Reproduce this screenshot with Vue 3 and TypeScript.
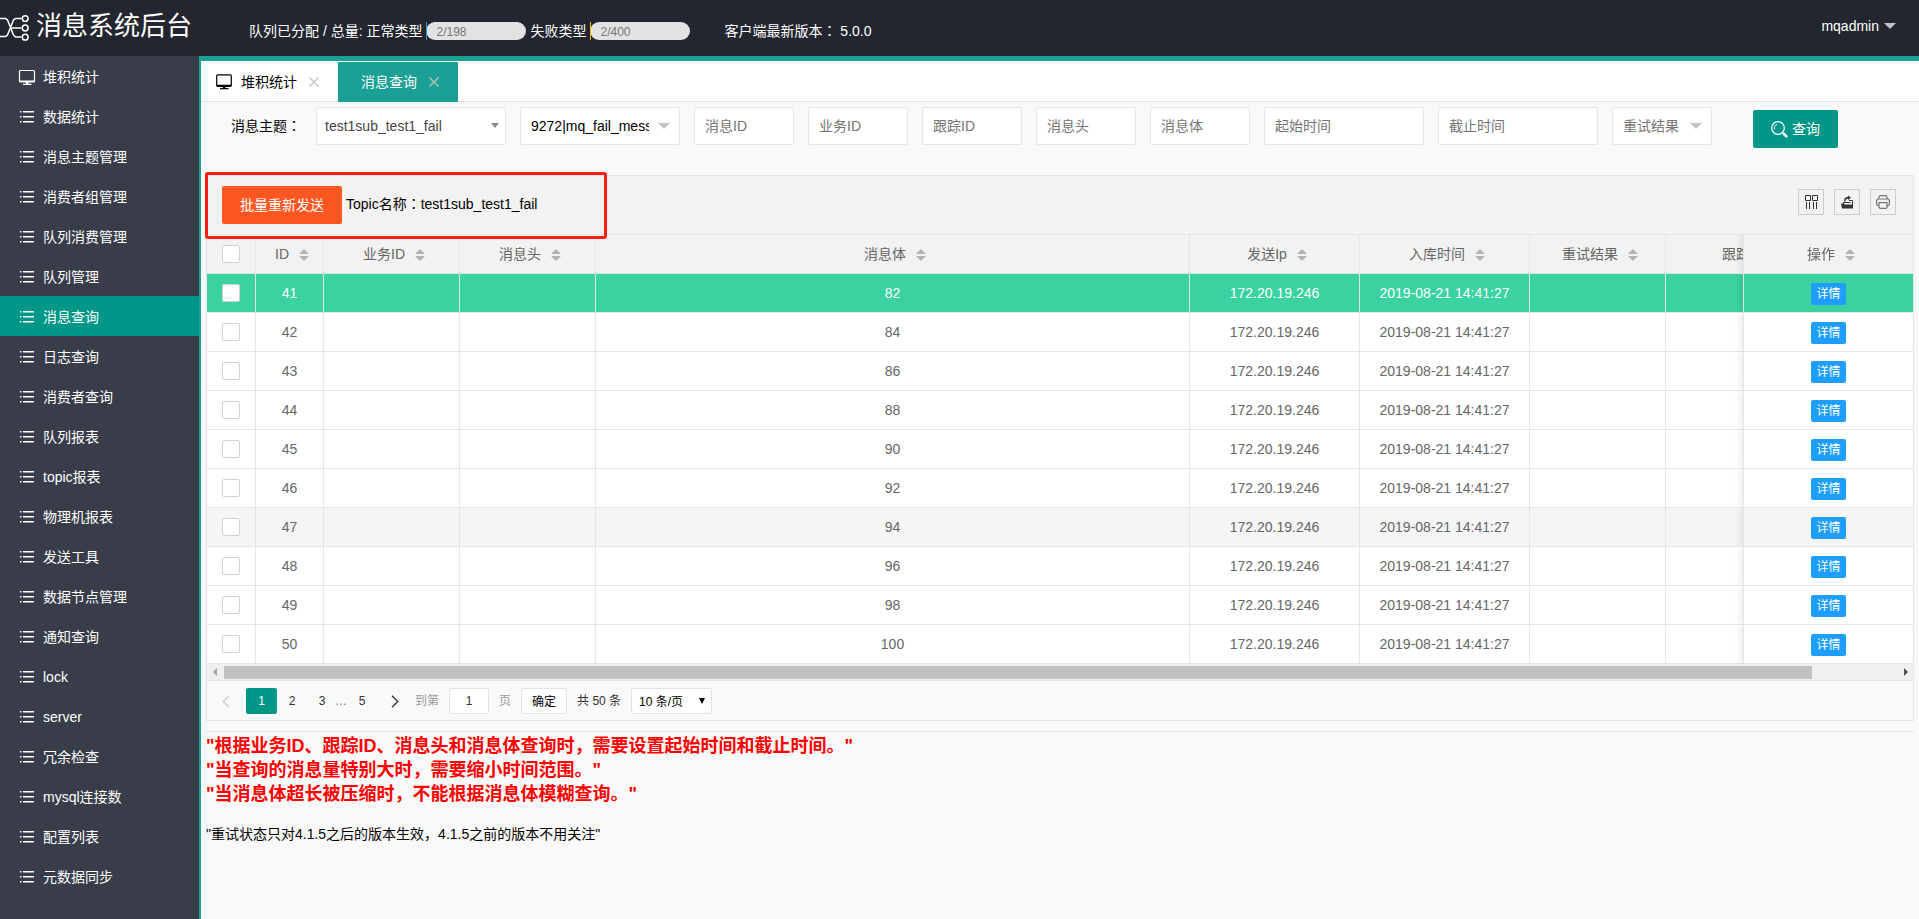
<script setup lang="ts">
import { ref } from 'vue'

interface Column {
  key: string
  label: string
}

const menu: string[] = [
  '堆积统计', '数据统计', '消息主题管理', '消费者组管理', '队列消费管理', '队列管理', '消息查询',
  '日志查询', '消费者查询', '队列报表', 'topic报表', '物理机报表', '发送工具', '数据节点管理',
  '通知查询', 'lock', 'server', '冗余检查', 'mysql连接数', '配置列表', '元数据同步',
]
const activeMenu = ref('消息查询')

const columns: Column[] = [
  { key: 'id', label: 'ID' },
  { key: 'biz', label: '业务ID' },
  { key: 'head', label: '消息头' },
  { key: 'body', label: '消息体' },
  { key: 'ip', label: '发送Ip' },
  { key: 'time', label: '入库时间' },
  { key: 'retry', label: '重试结果' },
  { key: 'trace', label: '跟踪ID' },
]

const rows = Array.from({ length: 10 }, (_, i) => ({
  id: 41 + i,
  body: 82 + i * 2,
  ip: '172.20.19.246',
  time: '2019-08-21 14:41:27',
}))
const selectedId = ref(41)
const hoveredId = ref(47)

const textFilters: string[] = ['消息ID', '业务ID', '跟踪ID', '消息头', '消息体']
const timeFilters: string[] = ['起始时间', '截止时间']
const targetPage = ref('1')
</script>

<template>
  <div class="app">
    <header class="header">
      <div class="brand">
        <svg class="logo" width="30" height="28" viewBox="0 0 30 28" fill="none" stroke="#fff" stroke-width="1.500">
          <path d="M0 4.500h5.500l2 1.500 6 15 2 2h6M0 22.500h5.500l2-1.500 6-15 2-1.500h6M11 14h10.500" />
          <circle cx="25.200" cy="4.600" r="2.900" />
          <circle cx="25.200" cy="14" r="2.900" />
          <circle cx="25.200" cy="23.200" r="2.900" />
        </svg>
        <h1>消息系统后台</h1>
      </div>
      <div class="status">
        <span>队列已分配 / 总量: 正常类型</span>
        <span class="progress normal">2/198</span>
        <span>失败类型</span>
        <span class="progress failed">2/400</span>
        <span class="version">客户端最新版本<span class="mid">：</span> 5.0.0</span>
      </div>
      <button class="user" type="button">mqadmin<i class="caret"></i></button>
    </header>

    <div class="body">
      <nav class="sidebar">
        <a
          v-for="(item, i) in menu"
          :key="item"
          href="#"
          :class="{ active: item === activeMenu }"
          @click.prevent="activeMenu = item"
        >
          <svg v-if="i === 0" class="monitor" width="18" height="17" viewBox="0 0 18 17">
            <rect x="1.500" y="1.500" width="15" height="11.500" rx="1" fill="none" stroke="currentColor" stroke-width="1.200" />
            <path d="M2 11.500h14v1.500H2zM8 13h2.500v2H8zM5 14.800h8.500V16H5z" fill="currentColor" />
          </svg>
          <svg v-else class="list" width="14" height="12" viewBox="0 0 14 12" fill="currentColor">
            <path d="M0 0h1.500v1.600H0zM3 0h11v1.600H3zM0 5h1.500v1.600H0zM3 5h11v1.600H3zM0 10h1.500v1.600H0zM3 10h11v1.600H3z" />
          </svg>
          <span>{{ item }}</span>
        </a>
      </nav>

      <main class="main">
        <div class="tabs">
          <div class="tab home">
            <svg width="16" height="16" viewBox="0 0 16 16">
              <rect x=".7" y=".9" width="14.600" height="11.400" rx="1" fill="none" stroke="currentColor" stroke-width="1.200" />
              <path d="M1 10.800h14v1.600H1zM7 12h2.500v2H7zM4 14h8.500v1.300H4z" fill="currentColor" />
            </svg>
            <span>堆积统计</span>
            <button type="button" class="close" aria-label="关闭堆积统计">
              <svg width="10" height="10" viewBox="0 0 10 10"><path d="M.5.5l9 9M9.500.5l-9 9" stroke="currentColor" stroke-width="1.200" /></svg>
            </button>
          </div>
          <div class="tab current">
            <span>消息查询</span>
            <button type="button" class="close" aria-label="关闭消息查询">
              <svg width="10" height="10" viewBox="0 0 10 10"><path d="M.5.5l9 9M9.500.5l-9 9" stroke="currentColor" stroke-width="1.200" /></svg>
            </button>
          </div>
        </div>

        <div class="content">
          <form class="filters" @submit.prevent>
            <label for="topic">消息主题<span class="mid">：</span></label>
            <div class="pick topic">
              <select id="topic"><option>test1sub_test1_fail</option></select>
            </div>
            <div class="pick wide">
              <select aria-label="消息表"><option>9272|mq_fail_message_01</option></select>
            </div>
            <input v-for="f in textFilters" :key="f" type="text" :placeholder="f" :aria-label="f">
            <input v-for="f in timeFilters" :key="f" class="wide" type="text" :placeholder="f" :aria-label="f">
            <div class="pick retry">
              <select aria-label="重试结果"><option>重试结果</option></select>
            </div>
            <button class="search" type="submit">
              <svg width="17" height="17" viewBox="0 0 17 17" fill="none" stroke="currentColor">
                <circle cx="7" cy="7" r="6.300" stroke-width="1.200" />
                <path d="M3.700 8.500A3.600 3.600 0 0 1 6 3.500" stroke-width="1" />
                <path d="M11.500 11.500l1.500 1.500" stroke-width="1.200" />
                <path d="M13 13l2.400 2.400" stroke-width="2.600" stroke-linecap="round" />
              </svg>
              <span>查询</span>
            </button>
          </form>

          <section class="panel">
            <div class="toolbar">
              <button class="resend" type="button">批量重新发送</button>
              <span class="topic-name">Topic名称<span class="mid">：</span>test1sub_test1_fail</span>
              <div class="tools">
                <button type="button" aria-label="筛选列">
                  <svg width="14" height="14" viewBox="0 0 14 14" fill="none" stroke="#333">
                    <path d="M1.500.5h5v5h-5zM8.500.5h5v5h-5zM2.500 7v7M5.500 7v7M9.500 7v7M12.500 7v7" />
                  </svg>
                </button>
                <button type="button" aria-label="导出">
                  <svg width="14" height="14" viewBox="0 0 14 14" fill="#333">
                    <path d="M1 8.500h2.500l1 1H13V13.500H2zM8 .5l3 2.200-3 2.200V3.500C6.300 3.500 5.600 4.600 5.300 6.500H4C4 3.500 5.300 1.900 8 1.700z" />
                    <path d="M3.500 9V7.500H6M9 5.500h3.500V10M5.500 7.500h5" fill="none" stroke="#333" />
                  </svg>
                </button>
                <button type="button" aria-label="打印">
                  <svg width="14" height="14" viewBox="0 0 14 14" fill="none" stroke="#777" stroke-width="1.200">
                    <path d="M3 4V2l1-1.400h6L11 2v2M3 10.500H1.500L.6 9.500v-4L1.600 4h10.800l1 1.500v4l-.9 1H11M3 7.600h8v4.800l-1 1H4l-1-1z" />
                  </svg>
                </button>
              </div>
              <div class="highlight" aria-hidden="true"></div>
            </div>

            <div class="scroller">
              <table>
                <colgroup>
                  <col class="c-check">
                  <col v-for="c in columns" :key="c.key" :class="'c-' + c.key">
                  <col class="c-action">
                </colgroup>
                <thead>
                  <tr>
                    <th class="check"><input type="checkbox" aria-label="全选"></th>
                    <th v-for="c in columns" :key="c.key" class="sortable">
                      <span>{{ c.label }}</span><i class="sort"></i>
                    </th>
                    <th class="sortable fixed"><span>操作</span><i class="sort"></i></th>
                  </tr>
                </thead>
                <tbody>
                  <tr
                    v-for="r in rows"
                    :key="r.id"
                    :class="{ selected: r.id === selectedId, hovered: r.id === hoveredId }"
                    @click="selectedId = r.id"
                    @mouseenter="hoveredId = r.id"
                  >
                    <td class="check"><input type="checkbox" :aria-label="'选择 ' + r.id"></td>
                    <td>{{ r.id }}</td>
                    <td></td>
                    <td></td>
                    <td>{{ r.body }}</td>
                    <td>{{ r.ip }}</td>
                    <td>{{ r.time }}</td>
                    <td></td>
                    <td></td>
                    <td class="fixed"><button type="button" class="detail">详情</button></td>
                  </tr>
                </tbody>
              </table>
            </div>
            <div class="scrollbar">
              <i class="arrow left"></i>
              <div class="track"><div class="thumb"></div></div>
              <i class="arrow right"></i>
            </div>

            <div class="pager">
              <button type="button" class="page step" disabled aria-label="上一页">
                <svg width="8" height="13" viewBox="0 0 8 13" fill="none" stroke="#d2d2d2" stroke-width="1.500"><path d="M7 .7L1.200 6.500 7 12.300" /></svg>
              </button>
              <button type="button" class="page on">1</button>
              <button type="button" class="page">2</button>
              <button type="button" class="page last">3</button>
              <span class="dots">…</span>
              <button type="button" class="page five">5</button>
              <button type="button" class="page step next" aria-label="下一页">
                <svg width="8" height="13" viewBox="0 0 8 13" fill="none" stroke="#333" stroke-width="1.300"><path d="M1 .7l5.800 5.800L1 12.300" /></svg>
              </button>
              <label for="goto">到第</label>
              <input id="goto" v-model="targetPage" type="text">
              <span class="unit">页</span>
              <button type="button" class="go">确定</button>
              <span class="total">共 50 条</span>
              <div class="size">
                <select aria-label="每页条数"><option>10 条/页</option></select>
              </div>
            </div>
          </section>

          <div class="notes">
            <p class="warn">"根据业务ID、跟踪ID、消息头和消息体查询时，需要设置起始时间和截止时间。"</p>
            <p class="warn">"当查询的消息量特别大时，需要缩小时间范围。"</p>
            <p class="warn">"当消息体超长被压缩时，不能根据消息体模糊查询。"</p>
            <p class="hint">"重试状态只对4.1.5之后的版本生效，4.1.5之前的版本不用关注"</p>
          </div>
        </div>
      </main>
    </div>
  </div>
</template>

<style>
body {
  margin: 0;
}
</style>

<style scoped>
.app {
  display: flex;
  flex-direction: column;
  min-height: 100vh;
  background: #f9f9f9;
  color: #000;
  font: 14px/24px "Liberation Sans", "Noto Sans CJK SC", sans-serif;
}
.app *,
.app *::before,
.app *::after {
  box-sizing: border-box;
}
button,
input,
select {
  margin: 0;
  padding: 0;
  border: 0;
  border-radius: 2px;
  outline: 0;
  background: none;
  color: inherit;
  font: inherit;
}
button {
  cursor: pointer;
}
select {
  appearance: none;
}
h1,
p {
  margin: 0;
}
svg {
  display: block;
  flex: none;
}
/* full-width colon centred in its em box */
.mid {
  font-family: "Noto Sans CJK TC", sans-serif;
  line-height: 1;
}

.header {
  display: flex;
  height: 56px;
  background: #23262e;
  color: #fff;
}
.brand {
  display: flex;
  align-items: flex-start;
  width: 249px;
  padding-top: 10px;
}
.logo {
  margin-top: 4px;
}
h1 {
  padding-left: 6px;
  font-size: 26px;
  font-weight: 400;
  line-height: 32px;
}
.status {
  display: flex;
  gap: 4px;
  padding-top: 19px;
  white-space: nowrap;
}
.progress {
  position: relative;
  width: 100px;
  height: 18px;
  margin-top: 3px;
  padding-left: 10px;
  border-radius: 9px;
  background: #e2e2e2;
  color: #777;
  font-size: 12px;
  line-height: 20px;
}
.progress::before {
  content: "";
  position: absolute;
  top: 0;
  left: 0;
  width: 1px;
  height: 100%;
}
.normal::before {
  background: #1e9fff;
}
.failed::before {
  background: #ffb800;
}
.version {
  margin-left: 30px;
}
.user {
  display: flex;
  align-items: center;
  gap: 5px;
  height: 52px;
  margin-left: auto;
  padding-right: 23px;
}
.caret {
  border: 6px solid transparent;
  border-top-color: #c2c2c4;
  border-bottom: 0;
}

.body {
  display: flex;
  flex: 1;
}
.sidebar {
  flex: none;
  width: 199px;
  background: #393d49;
}
.sidebar a {
  display: flex;
  align-items: center;
  height: 40px;
  padding: 2px 0 0 18px;
  color: #fff;
  text-decoration: none;
}
.sidebar .active {
  background: #009688;
}
.monitor {
  margin-right: 7px;
}
.list {
  margin: 0 9px 0 2px;
}
.main {
  flex: 1;
  min-width: 0;
  border-top: 5px solid #1aa094;
  border-left: 2px solid #1aa094;
}

.tabs {
  display: flex;
  height: 41px;
  padding-top: 1px;
  border-bottom: 1px solid #e2e2e2;
  background: #fff;
}
.tab {
  display: flex;
  align-items: center;
  height: 40px;
  padding-right: 19px;
}
.home {
  padding-left: 15px;
}
.home span {
  margin-left: 9px;
}
.current {
  padding-left: 23px;
  background: #1aa094;
  color: #fff;
}
.close {
  margin-left: 12px;
  color: #c2c2c2;
}

.content {
  padding: 5px 5px 20px;
}
.filters {
  display: flex;
  gap: 14px;
  margin-bottom: 30px;
  white-space: nowrap;
}
.filters label {
  margin-right: 1px;
  padding-left: 25px;
  line-height: 38px;
}
.filters input,
.filters select {
  display: block;
  width: 100px;
  height: 38px;
  padding-left: 10px;
  border: 1px solid #e6e6e6;
  background: #fff;
}
.filters input::placeholder {
  color: #757575;
  opacity: 1;
}
.pick {
  position: relative;
}
.pick::after {
  content: "";
  position: absolute;
  top: 16px;
  right: 10px;
  border: 6px solid transparent;
  border-top-color: #c2c2c2;
  border-bottom: 0;
  pointer-events: none;
}
.filters .wide,
.filters .wide select {
  width: 160px;
}
.filters .wide select {
  padding-right: 30px;
}
.filters .topic select {
  width: 190px;
  padding-left: 8px;
  color: #444;
}
.topic::after {
  right: 7px;
  border-width: 5px 4px 0;
  border-top-color: #888;
}
.retry select {
  color: #757575;
}
.search {
  display: flex;
  align-items: center;
  gap: 4px;
  height: 38px;
  margin: 3px 0 -3px 27px;
  padding: 0 18px;
  background: #009688;
  color: #fff;
}

.panel {
  border: 1px solid #e6e6e6;
}
.toolbar {
  position: relative;
  display: flex;
  height: 59px;
  padding: 10px 17px 0 15px;
  border-bottom: 1px solid #e6e6e6;
  background: #f2f2f2;
}
.resend {
  height: 38px;
  padding: 0 18px;
  background: #ff5722;
  color: #fff;
}
.topic-name {
  padding-left: 4px;
  line-height: 36px;
}
.tools {
  display: flex;
  gap: 10px;
  margin: 3px 0 0 auto;
}
.tools button {
  display: grid;
  place-items: center;
  width: 26px;
  height: 26px;
  border: 1px solid #ccc;
  border-radius: 0;
}
.highlight {
  position: absolute;
  top: -4px;
  left: -2px;
  z-index: 3;
  width: 402px;
  height: 67px;
  border: 3px solid #ff1e14;
  border-radius: 3px;
  pointer-events: none;
}

.scroller {
  overflow: hidden;
}
table {
  width: calc(100% + 93px);
  border-spacing: 0;
  table-layout: fixed;
  color: #666;
}
.c-check {
  width: 49px;
}
.c-id {
  width: 68px;
}
.c-biz,
.c-head,
.c-retry {
  width: 136px;
}
.c-ip,
.c-time,
.c-trace,
.c-action {
  width: 170px;
}
th,
td {
  height: 39px;
  padding: 0;
  border-right: 1px solid #e6e6e6;
  border-bottom: 1px solid #e6e6e6;
  background: #fff;
  font-weight: 400;
  line-height: 24px;
  text-align: center;
}
th {
  background: #f2f2f2;
}
.sortable {
  padding-left: 5px;
}
.sort {
  display: inline-flex;
  flex-direction: column;
  gap: 2px;
  margin-left: 10px;
  vertical-align: 5px;
}
.sort::before,
.sort::after {
  content: "";
  border: 5px solid transparent;
}
.sort::before {
  border-top: 0;
  border-bottom-color: #b2b2b2;
}
.sort::after {
  border-bottom: 0;
  border-top-color: #b2b2b2;
}
.check input {
  display: block;
  width: 18px;
  height: 18px;
  margin: 0 15px;
  border: 1px solid #d2d2d2;
  background: #fff;
  appearance: none;
}
.check input:checked {
  background: #5fb878;
}
.fixed {
  position: sticky;
  right: 0;
  border-right: 0;
  border-left: 1px solid #e6e6e6;
  box-shadow: -1px 0 8px rgba(0, 0, 0, 0.12);
  clip-path: inset(0 0 0 -10px);
}
.hovered td {
  background: #f5f5f5;
}
.selected td {
  background: #3ad2a0;
  color: #fff;
}
.detail {
  display: block;
  height: 22px;
  margin: 2px auto 0;
  padding: 0 5px;
  background: #1e9fff;
  color: #fff;
  font-size: 12px;
  line-height: 22px;
}

.scrollbar {
  display: flex;
  align-items: center;
  height: 17px;
  border-bottom: 1px solid #e6e6e6;
  background: #f0f0f0;
}
.arrow {
  width: 17px;
}
.arrow::before {
  content: "";
  display: block;
  width: 4px;
  margin: 0 6px;
  border: 4px solid transparent;
}
.left::before {
  border-left: 0;
  border-right-color: #a0a0a0;
}
.right::before {
  margin-left: 8px;
  border-right: 0;
  border-left-color: #505050;
}
.track {
  flex: 1;
}
.thumb {
  width: 95%;
  height: 13px;
  margin-top: 1px;
  background: #c1c1c1;
}

.pager {
  display: flex;
  height: 39px;
  padding: 7px 0 6px 15px;
  color: #333;
  font-size: 12px;
  line-height: 26px;
}
.page {
  width: 30px;
}
.step {
  display: flex;
  align-items: center;
  width: 24px;
}
.on {
  width: 31px;
  background: #009688;
  color: #fff;
}
.last {
  margin-right: -4px;
}
.dots {
  width: 16px;
  color: #777;
  text-align: center;
}
.five {
  width: 26px;
}
.next {
  padding-left: 16px;
}
.pager label,
.unit {
  color: #999;
}
.pager label {
  margin-left: 16px;
}
.pager input {
  width: 40px;
  margin: 0 10px;
  border: 1px solid #e2e2e2;
  background: #fff;
  text-align: center;
}
.go {
  margin: 0 10px;
  padding: 0 10px;
  border: 1px solid #e2e2e2;
  background: #fff;
  color: #000;
}
.size {
  position: relative;
  margin-left: 10px;
}
.size select {
  display: block;
  width: 81px;
  height: 26px;
  padding-left: 7px;
  border: 1px solid #e2e2e2;
  background: #fff;
  color: #000;
}
.size::after {
  content: "";
  position: absolute;
  top: 10px;
  right: 7px;
  border: 3px solid transparent;
  border-top: 6px solid #000;
  border-bottom: 0;
  pointer-events: none;
}

.notes {
  margin-top: 10px;
  padding-top: 2px;
  border-top: 1px solid #e6e6e6;
}
.warn {
  color: #f00;
  font-size: 18px;
  font-weight: 700;
}
.hint {
  margin-top: 16px;
}
</style>
